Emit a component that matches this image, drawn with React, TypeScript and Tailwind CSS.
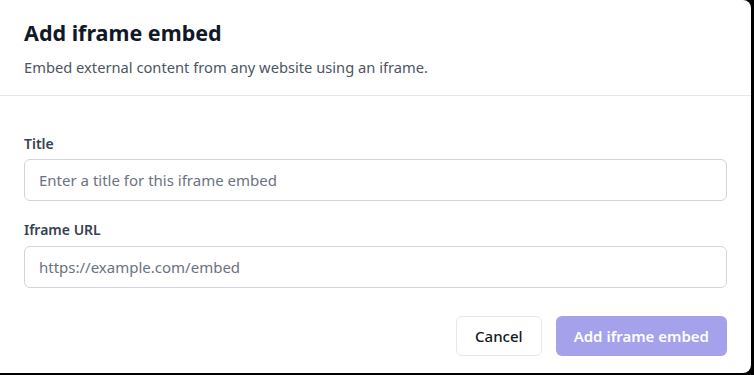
import React from "react";

export default function App() {
  return (
    <div className="w-[754px] h-[375px] bg-black" style={{ fontFamily: '"Noto Sans", "Open Sans", sans-serif' }}>
      <div className="w-[751px] h-[373px] bg-white rounded-br-lg rounded-tr-lg flex flex-col">
        <div className="px-6 pt-[19px] pb-[17px] border-b border-[#e5e7eb]">
          <h2 className="text-[21.5px] leading-[28px] font-bold text-[#111827]">Add iframe embed</h2>
          <p className="mt-[9px] text-[14.7px] leading-[22px] text-[#4b5563]">
            Embed external content from any website using an iframe.
          </p>
        </div>
        <div className="px-6 pt-[38px] flex flex-col">
          <label className="text-[14px] leading-[20px] font-semibold text-[#374151]">Title</label>
          <input
            className="mt-[5px] w-full h-[42px] rounded-md border border-[#d1d5db] px-[14px] text-[15px] text-[#111827] placeholder:text-[#6b7280] outline-none"
            placeholder="Enter a title for this iframe embed"
          />
          <label className="mt-[19px] text-[14px] leading-[20px] font-semibold text-[#374151]">Iframe URL</label>
          <input
            className="mt-[6px] w-full h-[42px] rounded-md border border-[#d1d5db] px-[14px] text-[15px] text-[#111827] placeholder:text-[#6b7280] outline-none"
            placeholder="https://example.com/embed"
          />
          <div className="mt-[28px] flex justify-end gap-[14px]">
            <button className="h-[40px] px-[18px] rounded-md border border-[#e5e7eb] bg-white text-[15px] font-medium text-[#111827]">
              Cancel
            </button>
            <button className="h-[40px] px-[18px] rounded-md bg-[#a6a1eb] text-[15px] font-semibold text-white">
              Add iframe embed
            </button>
          </div>
        </div>
      </div>
    </div>
  );
}
